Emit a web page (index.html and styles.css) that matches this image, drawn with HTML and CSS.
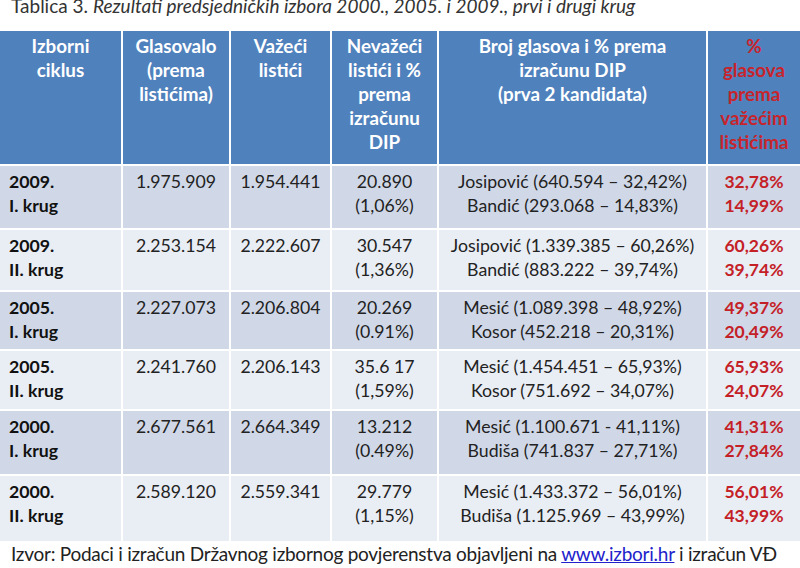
FILE: index.html
```html
<!DOCTYPE html>
<html lang="hr">
<head>
<meta charset="utf-8">
<title>Tablica 3</title>
<link rel="stylesheet" href="styles.css">
</head>
<body>
<p class="title">Tablica 3. <em>Rezultati predsjedničkih izbora 2000., 2005. i 2009., prvi i drugi krug</em></p>
<div class="grid">
  <div class="row head">
    <div>Izborni<br>ciklus</div>
    <div>Glasovalo<br>(prema<br>listićima)</div>
    <div>Važeći<br>listići</div>
    <div>Nevažeći<br>listići i %<br>prema<br>izračunu<br>DIP</div>
    <div>Broj glasova i % prema<br>izračunu DIP<br>(prva 2 kandidata)</div>
    <div class="red">%<br>glasova<br>prema<br>važećim<br>listićima</div>
  </div>
  <div class="row odd">
    <div class="cyc">2009.<br>I. krug</div>
    <div>1.975.909</div>
    <div>1.954.441</div>
    <div>20.890<br>(1,06%)</div>
    <div>Josipović (640.594 – 32,42%)<br>Bandić (293.068 – 14,83%)</div>
    <div class="pct">32,78%<br>14,99%</div>
  </div>
  <div class="row even">
    <div class="cyc">2009.<br>II. krug</div>
    <div>2.253.154</div>
    <div>2.222.607</div>
    <div>30.547<br>(1,36%)</div>
    <div>Josipović (1.339.385 – 60,26%)<br>Bandić (883.222 – 39,74%)</div>
    <div class="pct">60,26%<br>39,74%</div>
  </div>
  <div class="row odd">
    <div class="cyc">2005.<br>I. krug</div>
    <div>2.227.073</div>
    <div>2.206.804</div>
    <div>20.269<br>(0.91%)</div>
    <div>Mesić (1.089.398 – 48,92%)<br>Kosor (452.218 – 20,31%)</div>
    <div class="pct">49,37%<br>20,49%</div>
  </div>
  <div class="row even">
    <div class="cyc">2005.<br>II. krug</div>
    <div>2.241.760</div>
    <div>2.206.143</div>
    <div>35.6 17<br>(1,59%)</div>
    <div>Mesić (1.454.451 – 65,93%)<br>Kosor (751.692 – 34,07%)</div>
    <div class="pct">65,93%<br>24,07%</div>
  </div>
  <div class="row odd">
    <div class="cyc">2000.<br>I. krug</div>
    <div>2.677.561</div>
    <div>2.664.349</div>
    <div>13.212<br>(0.49%)</div>
    <div>Mesić (1.100.671 - 41,11%)<br>Budiša (741.837 – 27,71%)</div>
    <div class="pct">41,31%<br>27,84%</div>
  </div>
  <div class="row even">
    <div class="cyc">2000.<br>II. krug</div>
    <div>2.589.120</div>
    <div>2.559.341</div>
    <div>29.779<br>(1,15%)</div>
    <div>Mesić (1.433.372 – 56,01%)<br>Budiša (1.125.969 – 43,99%)</div>
    <div class="pct">56,01%<br>43,99%</div>
  </div>
</div>
<p class="source">Izvor: Podaci i izračun Državnog izbornog povjerenstva objavljeni na <a href="#">www.izbori.hr</a> i izračun VĐ</p>
</body>
</html>
```
FILE: styles.css
```css
html, body {
  margin: 0;
  padding: 0;
  background: #ffffff;
}
body {
  font-family: Lato, "Liberation Sans", sans-serif;
  color: #222222;
  width: 800px;
  overflow: hidden;
}
.title {
  margin: 0 0 20px 0;
  padding-left: 11px;
  font-size: 19px;
  line-height: 11px;
  color: #333333;
  white-space: nowrap;
}
.title em {
  font-style: italic;
}
.grid {
  display: grid;
  grid-template-columns: 121px 106px 99px 105px 267px 92px;
  grid-template-rows: 133px 62px 60px 57px 58px 63px 65px;
  gap: 2px;
  background: #ffffff;
  width: 800px;
}
.row {
  display: contents;
}
.row > div {
  padding: 4px 0 0 0;
  font-size: 17.7px;
  line-height: 24px;
  text-align: center;
  white-space: nowrap;
}
.head > div {
  background: #4f81bd;
  color: #ffffff;
  font-weight: 700;
  font-size: 18.8px;
  padding-top: 3px;
}
.head > div.red {
  color: #c8242c;
}
.odd > div {
  background: #d0d8e8;
}
.even > div {
  background: #e9edf4;
}
.row > div.cyc {
  text-align: left;
  padding-left: 9px;
  font-weight: 700;
  color: #111111;
}
.row > div.pct {
  color: #c42127;
  font-weight: 700;
  font-size: 17.5px;
}
.source {
  margin: 1px 0 0 0;
  padding-left: 11px;
  font-size: 19px;
  letter-spacing: -0.25px;
  line-height: 24px;
  color: #222222;
  white-space: nowrap;
}
.source a {
  color: #2222cc;
  text-decoration: underline;
}
```
